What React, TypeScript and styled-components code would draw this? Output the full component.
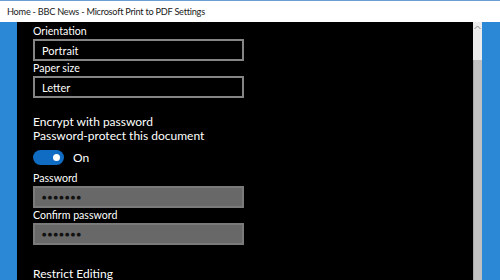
import React from 'react';
import styled, { createGlobalStyle } from 'styled-components';

const GlobalStyle = createGlobalStyle`
  html, body {
    margin: 0;
    padding: 0;
    background: #000;
  }
  body {
    font-family: Lato, 'Open Sans', sans-serif;
  }
`;

const Window = styled.div`
  width: 500px;
  height: 280px;
  display: flex;
  flex-direction: column;
  overflow: hidden;
`;

const TitleBar = styled.div`
  height: 21px;
  flex-shrink: 0;
  border-top: 1px solid #6b9fd1;
  background: #fff;
  color: #1a1a1a;
  font-size: 9.2px;
  letter-spacing: -0.25px;
  line-height: 21px;
  padding-left: 7px;
  white-space: nowrap;
`;

const Body = styled.div`
  flex: 1;
  display: flex;
  min-height: 0;
`;

const Accent = styled.div<{ $width: number }>`
  width: ${(p) => p.$width}px;
  flex-shrink: 0;
  background: #2b88d6;
`;

const Content = styled.div`
  flex: 1;
  background: #000;
  color: #fff;
  padding: 2px 0 0 16px;
  display: flex;
  flex-direction: column;
  overflow: hidden;
  & > * {
    flex-shrink: 0;
  }
`;

const Scrollbar = styled.div`
  width: 9px;
  flex-shrink: 0;
  display: flex;
  flex-direction: column;
  background: #ececec;
`;

const ScrollArrow = styled.div`
  height: 38px;
  display: flex;
  justify-content: center;
  padding-top: 3px;
  box-sizing: border-box;
`;

const ScrollThumb = styled.div`
  flex: 1;
  background: #c1c1c1;
  border-left: 1px solid #a8a8a8;
`;

const Label = styled.div`
  font-size: 10.6px;
  line-height: 15px;
  height: 15px;
`;

const Field = styled.div<{ $filled?: boolean }>`
  width: 211px;
  height: 22px;
  box-sizing: border-box;
  border: 2px solid ${(p) => (p.$filled ? '#7a7a7a' : '#858585')};
  background: ${(p) => (p.$filled ? '#686868' : '#000')};
  padding-left: 7px;
  display: flex;
  align-items: center;
  font-size: 11px;
  color: #fff;
`;

const Dots = styled.span`
  letter-spacing: 1.4px;
  font-size: 5px;
  font-family: 'DejaVu Sans', sans-serif;
  color: #111;
`;

const Heading = styled.div<{ $gap: number }>`
  font-size: 12px;
  line-height: 14px;
  margin-top: ${(p) => p.$gap}px;
`;

const ToggleRow = styled.div`
  display: flex;
  align-items: center;
  gap: 9px;
  margin: 7px 0 6px;
  font-size: 12px;
`;

const Toggle = styled.div`
  width: 31px;
  height: 15px;
  border-radius: 8px;
  background: #0f6cc2;
  display: flex;
  align-items: center;
  justify-content: flex-end;
  padding-right: 4px;
  box-sizing: border-box;
`;

const Knob = styled.div`
  width: 7px;
  height: 7px;
  border-radius: 50%;
  background: #fff;
`;

export default function App() {
  return (
    <Window>
      <GlobalStyle />
      <TitleBar>Home - BBC News - Microsoft Print to PDF Settings</TitleBar>
      <Body>
        <Accent $width={17} />
        <Content>
          <Label>Orientation</Label>
          <Field>Portrait</Field>
          <Label>Paper size</Label>
          <Field>Letter</Field>
          <Heading $gap={17}>Encrypt with password</Heading>
          <Heading $gap={0}>Password-protect this document</Heading>
          <ToggleRow>
            <Toggle>
              <Knob />
            </Toggle>
            On
          </ToggleRow>
          <Label>Password</Label>
          <Field $filled>
            <Dots>●●●●●●●</Dots>
          </Field>
          <Label>Confirm password</Label>
          <Field $filled>
            <Dots>●●●●●●●</Dots>
          </Field>
          <Heading $gap={22}>Restrict Editing</Heading>
        </Content>
        <Scrollbar>
          <ScrollArrow>
            <svg width="7" height="5" viewBox="0 0 7 5">
              <path d="M0.5 4 L3.5 1 L6.5 4" stroke="#8a8a8a" strokeWidth="1" fill="none" />
            </svg>
          </ScrollArrow>
          <ScrollThumb />
        </Scrollbar>
        <Accent $width={18} />
      </Body>
    </Window>
  );
}
